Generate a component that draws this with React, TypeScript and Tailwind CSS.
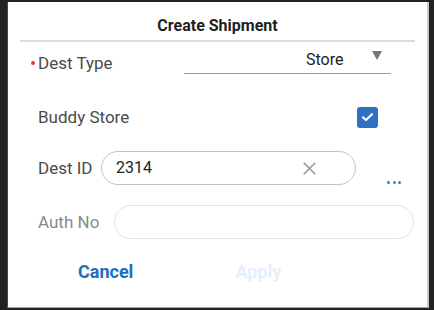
import { X } from 'lucide-react';

const font = { fontFamily: 'Roboto, "Liberation Sans", sans-serif' };

export default function App() {
  return (
    <div
      className="w-[434px] h-[310px] bg-[#232323] pl-[7px] pr-[5px] pt-[2px] pb-[2px]"
      style={font}
    >
      <div className="h-full bg-white border-l border-l-[#4a4a4a] border-r-[2px] border-r-[#c3ccd4] border-b border-b-[#9aa3aa] flex flex-col">
        {/* header */}
        <div className="pt-[14px] text-center text-[16px] leading-[20px] font-bold text-[#1f1f1f]">
          Create Shipment
        </div>
        <div className="mt-[4px] mx-[12px] h-[2px] bg-[#dcdcdc]" />

        {/* Dest Type */}
        <div className="flex items-start h-[40px]">
          <div className="flex items-center mt-[11px] ml-[23px] w-[153px]">
            <span className="w-[4px] h-[4px] rounded-full bg-[#e53935] mr-[3px]" />
            <span className="text-[17px] leading-[20px] text-[#4a4a4a]">Dest Type</span>
          </div>
          <div className="mt-[4px] w-[207px] h-[28px] border-b border-[#9e9e9e] flex items-center">
            <span className="ml-[122px] text-[16px] leading-[20px] text-[#222]">Store</span>
            <svg className="ml-[29px] -mt-[8px]" width="10" height="9" viewBox="0 0 10 9">
              <path d="M0 0 H10 L5 9 Z" fill="#757575" />
            </svg>
          </div>
        </div>

        {/* Buddy Store */}
        <div className="mt-[18px] h-[34px] flex items-center">
          <span className="ml-[30px] w-[319px] text-[17px] leading-[20px] text-[#4a4a4a]">Buddy Store</span>
          <div className="w-[21px] h-[21px] rounded-[3px] bg-[#2f70c2] flex items-center justify-center">
            <svg width="13" height="10" viewBox="0 0 13 10" fill="none">
              <path d="M2 5.4 L5 8 L11 2.2" stroke="white" strokeWidth="2.2" strokeLinecap="round" strokeLinejoin="round" />
            </svg>
          </div>
        </div>

        {/* Dest ID */}
        <div className="mt-[17px] h-[34px] flex items-center">
          <span className="ml-[30px] w-[63px] text-[17px] leading-[20px] text-[#4a4a4a]">Dest ID</span>
          <div className="w-[255px] h-[34px] rounded-full border border-[#c4c4c4] flex items-center pl-[14px] pr-[35px]">
            <span className="flex-1 text-[16px] leading-[20px] text-[#222]">2314</span>
            <X className="text-[#9a9a9a]" size={21} strokeWidth={2} />
          </div>
          <div className="ml-[31px] self-end mb-[1px] flex gap-[2.5px]">
            <span className="w-[3px] h-[3px] rounded-full bg-[#3b7fd1]" />
            <span className="w-[3px] h-[3px] rounded-full bg-[#3b7fd1]" />
            <span className="w-[3px] h-[3px] rounded-full bg-[#3b7fd1]" />
          </div>
        </div>

        {/* Auth No */}
        <div className="mt-[20px] h-[34px] flex items-center">
          <span className="ml-[30px] w-[76px] text-[17px] leading-[20px] text-[#8a8a8a]">Auth No</span>
          <div className="w-[300px] h-[34px] rounded-full border border-[#e2e2e2]" />
        </div>

        {/* actions */}
        <div className="mt-[23px] flex items-center text-[18px] leading-[20px] font-bold">
          <button className="ml-[70px] text-[#1b6fc0]">Cancel</button>
          <button className="ml-[102px] text-[#e6eff9]">Apply</button>
        </div>
      </div>
    </div>
  );
}
